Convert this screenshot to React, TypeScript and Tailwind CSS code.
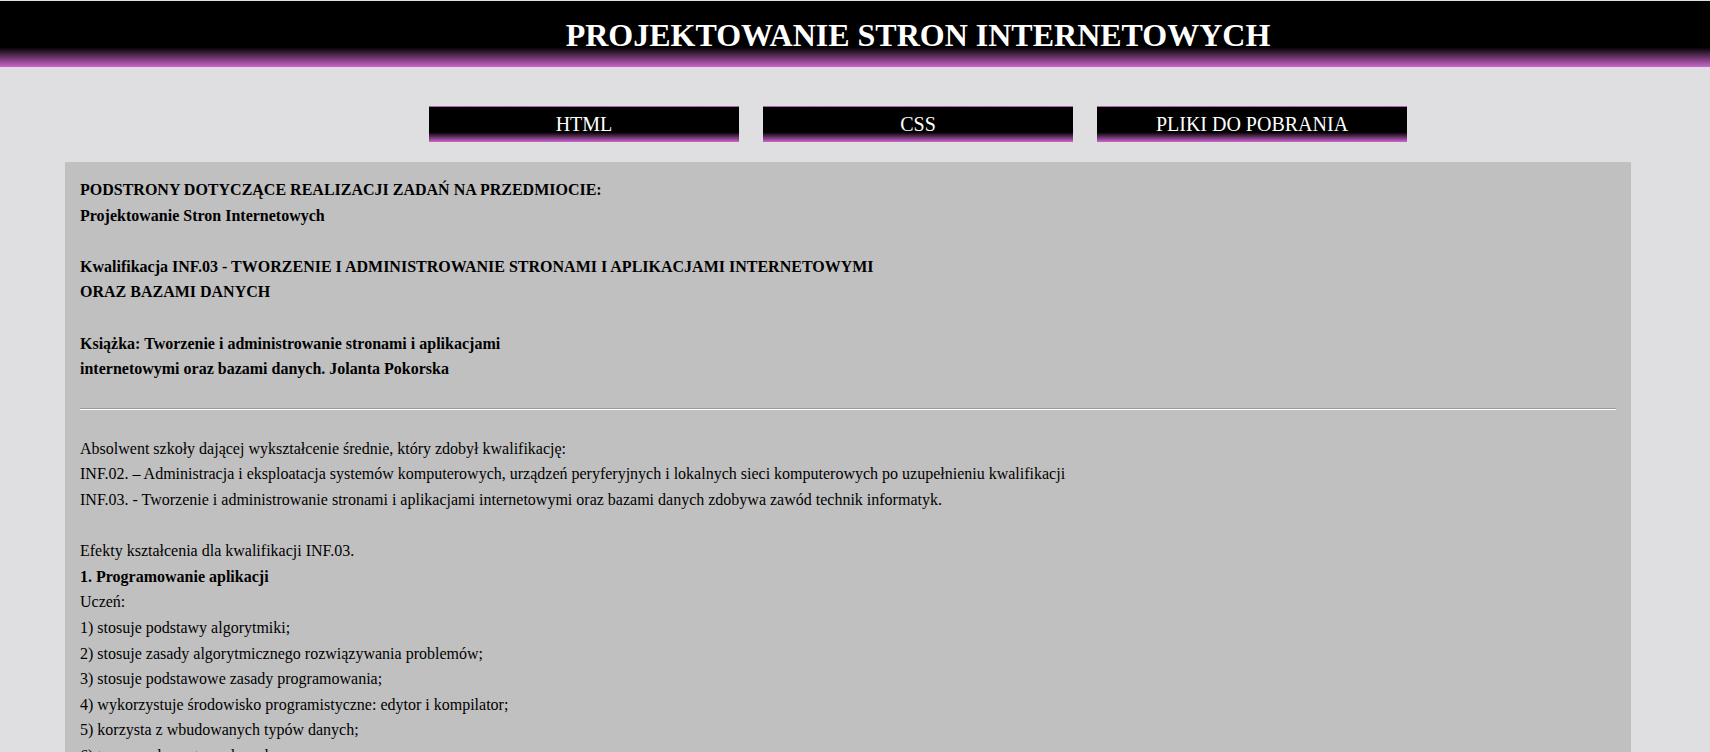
const navItems = ['HTML', 'CSS', 'PLIKI DO POBRANIA'];

const skills = [
  '1) stosuje podstawy algorytmiki;',
  '2) stosuje zasady algorytmicznego rozwiązywania problemów;',
  '3) stosuje podstawowe zasady programowania;',
  '4) wykorzystuje środowisko programistyczne: edytor i kompilator;',
  '5) korzysta z wbudowanych typów danych;',
  '6) tworzy własne typy danych;',
  '7) stosuje instrukcje, funkcje, procedury, obiekty, metody wybranych języków programowania;',
];

function Blank() {
  return <div className="h-[25.6px]" />;
}

export default function App() {
  return (
    <div
      className="h-screen overflow-hidden bg-[#dfdfe1] pt-px text-black"
      style={{ fontFamily: '"Liberation Serif", "Times New Roman", serif' }}
    >
      <header className="flex h-[66px] justify-center bg-[linear-gradient(to_bottom,#000_70%,#cc66cc_100%)] pl-[126px] pt-[10px]">
        <h1 className="text-[32px] font-bold leading-normal text-white">
          PROJEKTOWANIE STRON INTERNETOWYCH
        </h1>
      </header>

      <nav className="mt-[39px] flex justify-center gap-[24px] pl-[126px]">
        {navItems.map((item) => (
          <a
            key={item}
            href="#"
            className="block h-[36px] w-[310px] border-t border-dashed border-[#b060b0] bg-[linear-gradient(to_bottom,#000_72%,#cc66cc_100%)] text-center text-[20px] leading-[35px] text-white"
          >
            {item}
          </a>
        ))}
      </nav>

      <main className="ml-[65px] mt-[20px] w-[1566px] bg-[#c0c0c0] px-[15px] pt-[15px] pb-10 text-[16px] leading-[25.6px]">
        <div className="font-bold">
          <div>PODSTRONY DOTYCZĄCE REALIZACJI ZADAŃ NA PRZEDMIOCIE:</div>
          <div>Projektowanie Stron Internetowych</div>
          <Blank />
          <div>
            Kwalifikacja INF.03 - TWORZENIE I ADMINISTROWANIE STRONAMI I
            APLIKACJAMI INTERNETOWYMI
          </div>
          <div>ORAZ BAZAMI DANYCH</div>
          <Blank />
          <div>Książka: Tworzenie i administrowanie stronami i aplikacjami</div>
          <div>internetowymi oraz bazami danych. Jolanta Pokorska</div>
        </div>

        <div className="my-[26px] border-t border-b border-t-[#9a9a9a] border-b-white" />

        <div>
          <div>
            Absolwent szkoły dającej wykształcenie średnie, który zdobył
            kwalifikację:
          </div>
          <div>
            INF.02. – Administracja i eksploatacja systemów komputerowych,
            urządzeń peryferyjnych i lokalnych sieci komputerowych po
            uzupełnieniu kwalifikacji
          </div>
          <div>
            INF.03. - Tworzenie i administrowanie stronami i aplikacjami
            internetowymi oraz bazami danych zdobywa zawód technik informatyk.
          </div>
          <Blank />
          <div>Efekty kształcenia dla kwalifikacji INF.03.</div>
          <div className="font-bold">1. Programowanie aplikacji</div>
          <div>Uczeń:</div>
          {skills.map((skill) => (
            <div key={skill}>{skill}</div>
          ))}
        </div>
      </main>
    </div>
  );
}
